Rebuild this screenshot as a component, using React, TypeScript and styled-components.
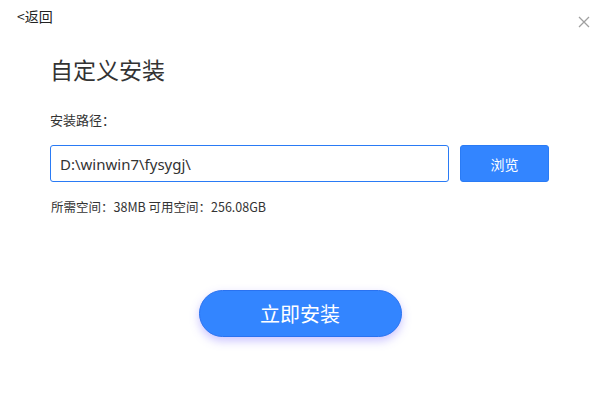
import React, { FunctionComponent } from 'react'
import styled, { createGlobalStyle } from 'styled-components'

const GlobalStyle = createGlobalStyle`
    html, body {
        margin: 0;
        padding: 0;
        background: #ffffff;
    }
    body {
        font-family: 'Noto Sans CJK SC', 'Noto Sans', sans-serif;
        color: #333333;
    }
`

const Root = styled.div`
    width: 600px;
    height: 400px;
    display: flex;
    flex-direction: column;
    box-sizing: border-box;
    overflow: hidden;
`

const TopBar = styled.div`
    display: flex;
    justify-content: space-between;
    align-items: flex-start;
    height: 52px;
    padding: 6px 10px 0 17px;
    box-sizing: border-box;
`

const Back = styled.a`
    font-size: 14px;
    line-height: 20px;
    color: #222222;
    cursor: pointer;
`

const Close = styled.div`
    width: 12px;
    height: 12px;
    margin-top: 3px;
    cursor: pointer;
`

const Content = styled.div`
    display: flex;
    flex-direction: column;
    padding: 0 50px;
`

const Title = styled.h1`
    margin: -1px 0 0;
    font-size: 23px;
    line-height: 36px;
    font-weight: 400;
    color: #333333;
`

const Label = styled.div`
    margin-top: 23px;
    font-size: 13px;
    line-height: 20px;
    color: #333333;
`

const PathRow = styled.div`
    display: flex;
    gap: 11px;
    margin-top: 15px;
`

const PathInput = styled.input`
    width: 399px;
    height: 37px;
    box-sizing: border-box;
    border: 1px solid #2a7bf5;
    border-radius: 3px;
    padding: 0 9px;
    font-family: 'Noto Sans', 'Noto Sans CJK SC', sans-serif;
    font-size: 15px;
    color: #333333;
    outline: none;
`

const BrowseButton = styled.button`
    width: 89px;
    height: 37px;
    border: 1px solid #2a7bf5;
    border-radius: 3px;
    background: #3385ff;
    color: #ffffff;
    font-family: 'Noto Sans CJK SC', sans-serif;
    font-size: 14px;
    cursor: pointer;
`

const SpaceInfo = styled.div`
    margin-top: 15px;
    font-size: 12.5px;
    line-height: 20px;
    color: #333333;
    padding-left: 1px;
`

const InstallWrap = styled.div`
    display: flex;
    justify-content: center;
    margin-top: 73px;
`

const InstallButton = styled.button`
    width: 203px;
    height: 47px;
    border: 1px solid #2a72f0;
    border-radius: 24px;
    background: #3385ff;
    color: #ffffff;
    font-family: 'Noto Sans CJK SC', sans-serif;
    font-size: 20px;
    box-shadow: 0 4px 10px rgba(110, 90, 255, 0.35);
    cursor: pointer;
`

const App: FunctionComponent = () => {
    return (
        <Root>
            <GlobalStyle />
            <TopBar>
                <Back>&lt;返回</Back>
                <Close>
                    <svg width="12" height="12" viewBox="0 0 12 12">
                        <path d="M1 1 L11 11 M11 1 L1 11" stroke="#a0a0a0" strokeWidth="1.3" fill="none" />
                    </svg>
                </Close>
            </TopBar>
            <Content>
                <Title>自定义安装</Title>
                <Label>安装路径：</Label>
                <PathRow>
                    <PathInput defaultValue="D:\winwin7\fysygj\" />
                    <BrowseButton>浏览</BrowseButton>
                </PathRow>
                <SpaceInfo>所需空间：38MB 可用空间：256.08GB</SpaceInfo>
            </Content>
            <InstallWrap>
                <InstallButton>立即安装</InstallButton>
            </InstallWrap>
        </Root>
    )
}

export default App
